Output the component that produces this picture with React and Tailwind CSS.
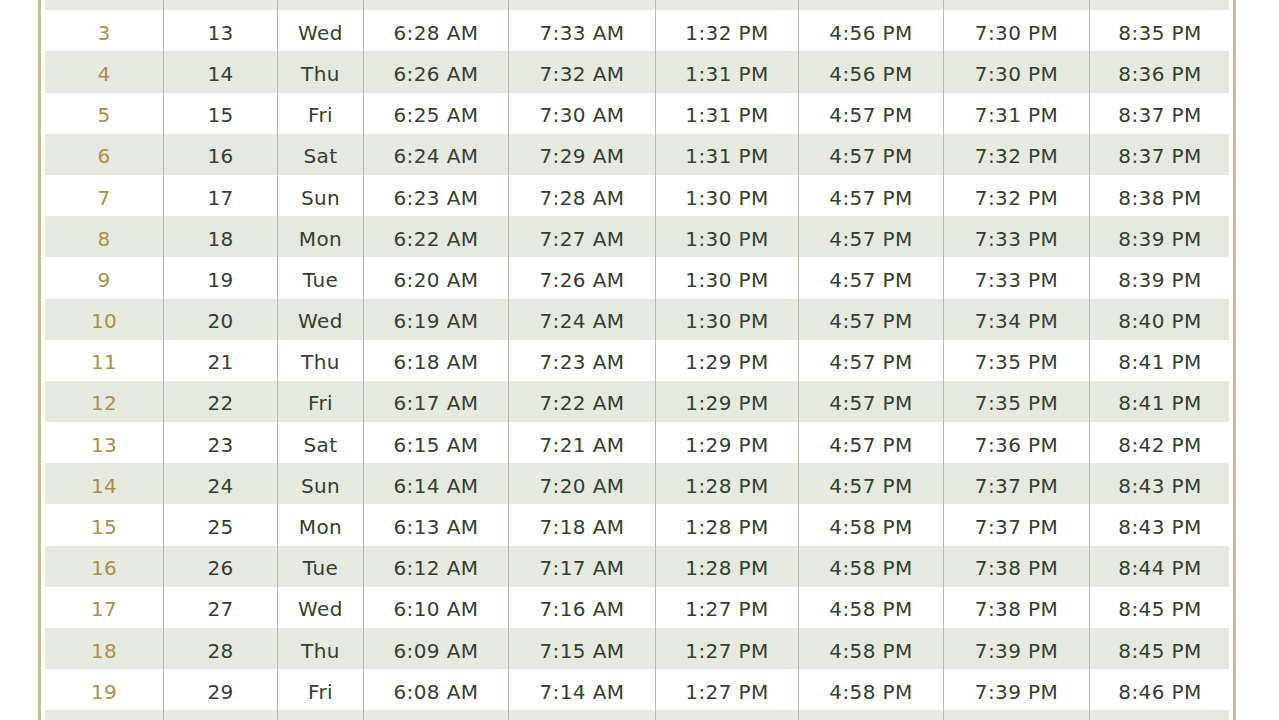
import React from "react";

const rows = [
  ["2", "12", "Tue", "6:29 AM", "7:34 AM", "1:32 PM", "4:56 PM", "7:29 PM", "8:34 PM"],
  ["3", "13", "Wed", "6:28 AM", "7:33 AM", "1:32 PM", "4:56 PM", "7:30 PM", "8:35 PM"],
  ["4", "14", "Thu", "6:26 AM", "7:32 AM", "1:31 PM", "4:56 PM", "7:30 PM", "8:36 PM"],
  ["5", "15", "Fri", "6:25 AM", "7:30 AM", "1:31 PM", "4:57 PM", "7:31 PM", "8:37 PM"],
  ["6", "16", "Sat", "6:24 AM", "7:29 AM", "1:31 PM", "4:57 PM", "7:32 PM", "8:37 PM"],
  ["7", "17", "Sun", "6:23 AM", "7:28 AM", "1:30 PM", "4:57 PM", "7:32 PM", "8:38 PM"],
  ["8", "18", "Mon", "6:22 AM", "7:27 AM", "1:30 PM", "4:57 PM", "7:33 PM", "8:39 PM"],
  ["9", "19", "Tue", "6:20 AM", "7:26 AM", "1:30 PM", "4:57 PM", "7:33 PM", "8:39 PM"],
  ["10", "20", "Wed", "6:19 AM", "7:24 AM", "1:30 PM", "4:57 PM", "7:34 PM", "8:40 PM"],
  ["11", "21", "Thu", "6:18 AM", "7:23 AM", "1:29 PM", "4:57 PM", "7:35 PM", "8:41 PM"],
  ["12", "22", "Fri", "6:17 AM", "7:22 AM", "1:29 PM", "4:57 PM", "7:35 PM", "8:41 PM"],
  ["13", "23", "Sat", "6:15 AM", "7:21 AM", "1:29 PM", "4:57 PM", "7:36 PM", "8:42 PM"],
  ["14", "24", "Sun", "6:14 AM", "7:20 AM", "1:28 PM", "4:57 PM", "7:37 PM", "8:43 PM"],
  ["15", "25", "Mon", "6:13 AM", "7:18 AM", "1:28 PM", "4:58 PM", "7:37 PM", "8:43 PM"],
  ["16", "26", "Tue", "6:12 AM", "7:17 AM", "1:28 PM", "4:58 PM", "7:38 PM", "8:44 PM"],
  ["17", "27", "Wed", "6:10 AM", "7:16 AM", "1:27 PM", "4:58 PM", "7:38 PM", "8:45 PM"],
  ["18", "28", "Thu", "6:09 AM", "7:15 AM", "1:27 PM", "4:58 PM", "7:39 PM", "8:45 PM"],
  ["19", "29", "Fri", "6:08 AM", "7:14 AM", "1:27 PM", "4:58 PM", "7:39 PM", "8:46 PM"],
  ["20", "30", "Sat", "6:07 AM", "7:13 AM", "1:27 PM", "4:58 PM", "7:40 PM", "8:47 PM"],
];

const colWidths = [
  "w-[118px]",
  "w-[114px]",
  "w-[86px]",
  "w-[145px]",
  "w-[147px]",
  "w-[143px]",
  "w-[145px]",
  "w-[146px]",
  "w-[141px]",
];

const Row = ({ cells, striped }) => (
  <div className={`flex h-[41.2px] ${striped ? "bg-[#e6e9e0]" : "bg-white"}`}>
    {cells.map((c, i) => (
      <div
        key={i}
        className={`${colWidths[i]} shrink-0 flex items-center justify-center pt-[4px] whitespace-nowrap ${
          i === 0 ? "text-[#ac9044]" : "text-[#343f30] border-l border-[#bab7ab]"
        }`}
      >
        {c}
      </div>
    ))}
  </div>
);

const App = () => {
  return (
    <div className="h-[720px] w-[1279px] overflow-hidden bg-white">
      <div
        className="ml-[38px] w-[1198px] mt-[-31px] border-x-[3px] border-[#cbbb92] px-[4px] text-[20px] tracking-[0.4px]"
        style={{ fontFamily: '"DejaVu Sans", sans-serif' }}
      >
        {rows.map((r, i) => (
          <Row key={r[0]} cells={r} striped={i % 2 === 0} />
        ))}
      </div>
    </div>
  );
};

export default App;
